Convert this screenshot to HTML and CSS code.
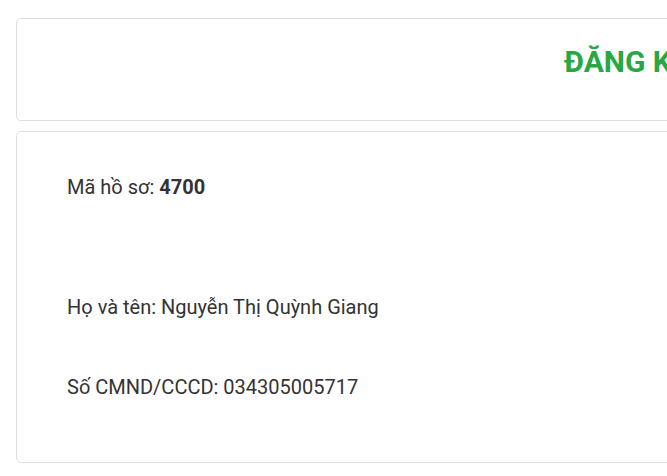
FILE: index.html
```html
<!DOCTYPE html>
<html lang="vi">
<head>
<meta charset="utf-8">
<title>Đăng ký</title>
<link rel="stylesheet" href="styles.css">
</head>
<body>
<div class="page">
  <div class="card card-header">
    <h1 class="title">ĐĂNG KÝ XÉT TUYỂN</h1>
  </div>
  <div class="card card-body">
    <p class="field field-code">Mã hồ sơ: <strong>4700</strong></p>
    <p class="field field-name">Họ và tên: Nguyễn Thị Quỳnh Giang</p>
    <p class="field field-id">Số CMND/CCCD: 034305005717</p>
  </div>
</div>
</body>
</html>
```

FILE: styles.css
```css
html, body {
  margin: 0;
  padding: 0;
  overflow: hidden;
  background: #fff;
}
body {
  font-family: Roboto, "Noto Sans", sans-serif;
  color: #333;
}
.page {
  width: 1200px;
  padding: 18px 0 0 16px;
  display: flex;
  flex-direction: column;
  gap: 10px;
}
.card {
  border: 1px solid #dedede;
  border-radius: 5px;
  background: #fff;
}
.card-header {
  height: 101px;
  box-sizing: content-box;
}
.title {
  margin: 0;
  padding: 25px 0 0 547px;
  font-size: 30px;
  font-weight: 700;
  color: #28a745;
  line-height: 36px;
  white-space: nowrap;
}
.card-body {
  height: 330px;
  box-sizing: content-box;
  padding: 0 50px;
}
.field {
  margin: 0;
  font-size: 20px;
  line-height: 30px;
}
.field-code { margin-top: 40px; }
.field-name { margin-top: 90px; }
.field-id { margin-top: 50px; }
```
